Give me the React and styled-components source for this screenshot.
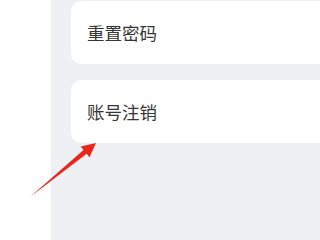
import React from "react";
import styled, { createGlobalStyle } from "styled-components";

const Global = createGlobalStyle`
  html, body { margin: 0; padding: 0; background: #ffffff; }
  body { font-family: "Noto Sans CJK SC", "Noto Sans", sans-serif; }
`;

const Page = styled.div`
  position: relative;
  display: flex;
  width: 100vw;
  min-width: 290px;
  height: 100vh;
  min-height: 205px;
  overflow: hidden;
  background: #ffffff;
`;

const Gutter = styled.div`
  width: 51px;
  flex-shrink: 0;
  background: #ffffff;
`;

const Main = styled.div`
  flex: 1;
  display: flex;
  flex-direction: column;
  gap: 16px;
  padding: 1px 0 0 20px;
  background: #eff0f4;
  overflow: hidden;
`;

const Card = styled.div`
  display: flex;
  align-items: center;
  height: 63px;
  margin-right: -20px;
  padding-left: 16px;
  background: #ffffff;
  border-radius: 10px;
  flex-shrink: 0;
`;

const Label = styled.span`
  font-size: 17.5px;
  color: #353535;
  letter-spacing: 0;
`;

const Arrow = styled.svg`
  position: absolute;
  left: 0;
  top: 0;
  width: 290px;
  height: 205px;
  pointer-events: none;
`;

export default function App() {
  return (
    <>
      <Global />
      <Page>
        <Gutter />
        <Main>
          <Card>
            <Label>重置密码</Label>
          </Card>
          <Card>
            <Label>账号注销</Label>
          </Card>
        </Main>
        <Arrow viewBox="0 0 290 205">
          <polygon
            points="30,197 83.5,150 80.7,146.5 96,143 89.5,157.3 86.7,153.8"
            fill="#e8261c"
          />
        </Arrow>
      </Page>
    </>
  );
}
